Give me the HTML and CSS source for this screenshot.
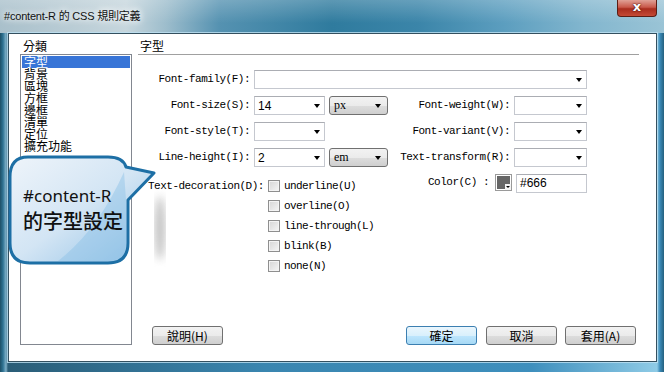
FILE: index.html
```html
<!DOCTYPE html>
<html lang="zh-Hant">
<head>
  <meta charset="UTF-8" />
  <title>#content-R 的 CSS 規則定義</title>
  <link rel="stylesheet" href="styles.css">
</head>
<body>
  <div class="window">
    <div class="titlebar">
      <span class="title">#content-R 的 CSS 規則定義</span>
      <span class="close">x</span>
    </div>

    <div class="client">
      <div class="side">
        <div class="side-label">分類</div>
        <ul class="cats">
          <li class="sel">字型</li>
          <li>背景</li>
          <li>區塊</li>
          <li>方框</li>
          <li>邊框</li>
          <li>清單</li>
          <li>定位</li>
          <li>擴充功能</li>
        </ul>
      </div>

      <div class="main">
        <div class="section-title">字型</div>

        <div class="grid">
          <span class="lbl">Font-family(F):</span>
          <div class="combo span4"><span class="arrow"></span></div>

          <span class="lbl">Font-size(S):</span>
          <div class="combo"><span class="val">14</span><span class="arrow"></span></div>
          <div class="select"><span class="unit">px</span><span class="arrow"></span></div>
          <span class="lbl">Font-weight(W):</span>
          <div class="combo"><span class="arrow"></span></div>

          <span class="lbl">Font-style(T):</span>
          <div class="combo"><span class="arrow"></span></div>
          <span class="lbl r">Font-variant(V):</span>
          <div class="combo"><span class="arrow"></span></div>

          <span class="lbl">Line-height(I):</span>
          <div class="combo"><span class="val">2</span><span class="arrow"></span></div>
          <div class="select"><span class="unit">em</span><span class="arrow"></span></div>
          <span class="lbl">Text-transform(R):</span>
          <div class="combo"><span class="arrow"></span></div>
        </div>

        <div class="lower">
          <div class="deco">
            <span class="lbl deco-lbl">Text-decoration(D):</span>
            <ul class="checks">
              <li><span class="check"></span>underline(U)</li>
              <li><span class="check"></span>overline(O)</li>
              <li><span class="check"></span>line-through(L)</li>
              <li><span class="check"></span>blink(B)</li>
              <li><span class="check"></span>none(N)</li>
            </ul>
          </div>
          <div class="color">
            <span class="lbl">Color(C) :</span>
            <span class="swatch">
              <svg width="17" height="17" viewBox="0 0 17 17">
                <rect x="0.5" y="0.5" width="16" height="16" fill="#fff" stroke="#9a9a9a"/>
                <rect x="2" y="2" width="13" height="13" fill="#666"/>
                <rect x="10" y="10" width="6" height="6" fill="#f4f4f4"/>
                <path d="M11 12 H15 L13 14 Z" fill="#000"/>
              </svg>
            </span>
            <div class="field">#666</div>
          </div>
        </div>

        <div class="buttons">
          <span class="btn help">說明(H)</span>
          <span class="btn default">確定</span>
          <span class="btn">取消</span>
          <span class="btn">套用(A)</span>
        </div>
      </div>
    </div>

    <!-- 說明泡泡 -->
    <div class="callout">
      <svg width="175" height="125" viewBox="0 0 175 125">
        <defs>
          <linearGradient id="bub" x1="0" y1="0" x2="1" y2="1">
            <stop offset="0" stop-color="#eef4fa"/>
            <stop offset="0.5" stop-color="#d3e5f4"/>
            <stop offset="1" stop-color="#8dbfe5"/>
          </linearGradient>
          <filter id="soft"><feGaussianBlur stdDeviation="4"/></filter>
        </defs>
        <ellipse cx="160" cy="78" rx="5" ry="32" fill="#8a8a8a" opacity="0.55" filter="url(#soft)"/>
        <path d="M28 7 H108 Q123 7 126 17 L154 23 L128 50 V93 Q128 113 108 113 H30 Q10 113 10 93 V27 Q10 7 28 7 Z"
              fill="url(#bub)" stroke="#1d6fa5" stroke-width="3" stroke-linejoin="round"/>
        <path d="M58 111 Q98 80 124 22 L126 50 V93 Q126 111 108 111 Z" fill="#8cc0e6" opacity="0.45"/>
      </svg>
      <div class="callout-text">
        <div class="line1">#content-R</div>
        <div class="line2">的字型設定</div>
      </div>
    </div>
  </div>
</body>
</html>
```

FILE: styles.css
```css
* {
  box-sizing: border-box;
}
body {
  margin: 0;
  font-family: "Noto Sans CJK TC", "Liberation Sans", sans-serif;
  font-size: 12px;
  color: #000;
}
.window {
  position: relative;
  width: 664px;
  height: 372px;
  display: flex;
  flex-direction: column;
  overflow: hidden;
  background: linear-gradient(90deg, #1d4f66 0, #2f7393 3px, #7fb0c8 6px, #2a5d77 8px, #3a86b0 40%, #3e8fbd 80%, #8fcbe6 657px, #3a8ab8 660px, #24607e 664px);
}
.titlebar {
  height: 33px;
  display: flex;
  justify-content: space-between;
  align-items: flex-start;
  background:
    linear-gradient(180deg, rgba(255,255,255,0.22), rgba(255,255,255,0) 70%),
    linear-gradient(90deg, #a9c0cb 0%, #c6d6dd 19%, #9dbdcc 25%, #5592b1 33%, #2f7b9e 50%, #3b85a9 63%, #5c9ebf 76%, #82b6ce 88%, #9ac4d6 100%);
}
.title {
  margin: 7px 0 0 4px;
  font-family: "Liberation Sans", "Noto Sans CJK TC", sans-serif;
  font-size: 11px;
  letter-spacing: -0.2px;
  color: #111;
  text-shadow: 0 0 6px #fff, 0 0 10px #fff;
}
.close {
  width: 40px;
  height: 17px;
  margin-right: 7px;
  border: 1px solid #5b1d14;
  border-top: none;
  border-radius: 0 0 4px 4px;
  background: linear-gradient(180deg, #e0a196 0, #c9594a 45%, #a92d1e 55%, #c44a35 100%);
  color: #fff;
  font-family: "DejaVu Sans", sans-serif;
  font-weight: bold;
  font-size: 13px;
  line-height: 14px;
  text-align: center;
  text-shadow: 0 0 2px #4a120b, 0 0 1px #4a120b;
}
.client {
  flex: 1;
  margin: 0 7px 10px 8px;
  padding: 4px 17px 16px 11px;
  display: flex;
  background: #fff;
  border: 1px solid #34505f;
  box-shadow: 0 0 0 1px rgba(190,225,242,0.8);
}

/* 左側分類 */
.side {
  width: 112px;
  display: flex;
  flex-direction: column;
}
.side-label {
  height: 16px;
  line-height: 16px;
  padding-left: 3px;
}
.cats {
  flex: 1;
  margin: 0;
  padding: 1px;
  list-style: none;
  border: 1px solid #828790;
}
.cats li {
  height: 12px;
  line-height: 12px;
  padding-left: 2px;
}
.cats li.sel {
  background: #3875d7;
  color: #fff;
}

/* 右側表單 */
.main {
  flex: 1;
  margin-left: 6px;
  display: flex;
  flex-direction: column;
}
.section-title {
  height: 17px;
  line-height: 16px;
  padding-left: 2px;
  border-bottom: 1px solid #a0a0a0;
}
.lbl {
  font-family: "Liberation Mono", monospace;
  font-size: 11px;
  letter-spacing: -0.5px;
  white-space: nowrap;
}
.grid {
  margin-top: 15px;
  display: grid;
  grid-template-columns: 112px 71px 59px 118px 73px;
  grid-auto-rows: 19px;
  column-gap: 4px;
  row-gap: 7px;
}
.grid .lbl {
  text-align: right;
  line-height: 19px;
}
.grid .lbl.r {
  grid-column: 4;
}
.span4 {
  grid-column: 2 / 6;
}
.combo {
  display: flex;
  align-items: center;
  padding: 0 4px 0 3px;
  background: #fff;
  border: 1px solid #c5c8cf;
  border-top-color: #abadb3;
}
.val {
  font-family: "Liberation Sans", sans-serif;
  font-size: 12px;
}
.arrow {
  margin-left: auto;
  width: 0;
  height: 0;
  border-left: 3.5px solid transparent;
  border-right: 3.5px solid transparent;
  border-top: 4px solid #000;
}
.select {
  display: flex;
  align-items: center;
  padding: 0 6px 0 4px;
  border: 1px solid #707070;
  border-radius: 3px;
  background: linear-gradient(180deg, #f2f2f2 0, #ebebeb 50%, #dddddd 51%, #cfcfcf 100%);
}
.unit {
  font-family: "Liberation Serif", serif;
  font-size: 12px;
}

.lower {
  width: 449px;
  margin-top: 7px;
  display: flex;
  align-items: flex-start;
}
.deco {
  display: flex;
  margin-left: 10px;
  padding-top: 2px;
}
.deco-lbl {
  line-height: 20px;
}
.checks {
  margin: 0 0 0 4px;
  padding: 0;
  list-style: none;
}
.checks li {
  height: 20px;
  display: flex;
  align-items: center;
  font-family: "Liberation Mono", monospace;
  font-size: 11px;
  letter-spacing: -0.6px;
}
.check {
  width: 12px;
  height: 12px;
  margin-right: 4px;
  border: 1px solid #8f8f8f;
  background: linear-gradient(135deg, #d6d6d6, #f6f6f6);
  box-shadow: inset 0 0 0 1px #f4f4f4;
}
.color {
  margin-left: auto;
  display: flex;
  align-items: flex-start;
}
.color .lbl {
  line-height: 17px;
}
.swatch {
  height: 17px;
  margin: 0 4px 0 6px;
}
.field {
  width: 71px;
  height: 19px;
  line-height: 17px;
  padding-left: 3px;
  border: 1px solid #c5c8cf;
  border-top-color: #abadb3;
  font-family: "Liberation Sans", sans-serif;
  font-size: 12px;
}

.buttons {
  margin-top: auto;
  margin-right: 3px;
  display: flex;
}
.btn {
  width: 71px;
  height: 19px;
  line-height: 17px;
  text-align: center;
  border: 1px solid #707070;
  border-radius: 3px;
  background: linear-gradient(180deg, #f2f2f2 0, #ebebeb 50%, #dddddd 51%, #cfcfcf 100%);
  margin-left: 8px;
}
.btn.help {
  margin-left: 14px;
  margin-right: auto;
}
.btn.default {
  border-color: #3c7fb1;
  background: linear-gradient(180deg, #eaf6fd 0, #d9f0fc 50%, #bee6fd 51%, #a7d9f5 100%);
  margin-right: 1px;
}

/* 說明泡泡 */
.callout {
  position: absolute;
  left: 0;
  top: 150px;
  width: 175px;
  height: 125px;
}
.callout svg {
  display: block;
}
.callout-text {
  position: absolute;
  left: 23px;
  top: 36px;
  color: #111;
}
.line1 {
  font-family: "Noto Sans", sans-serif;
  font-size: 17px;
  line-height: 20px;
}
.line2 {
  margin-top: 2px;
  font-family: "Noto Sans CJK TC", sans-serif;
  font-size: 20px;
  font-weight: 500;
  line-height: 26px;
}
```
